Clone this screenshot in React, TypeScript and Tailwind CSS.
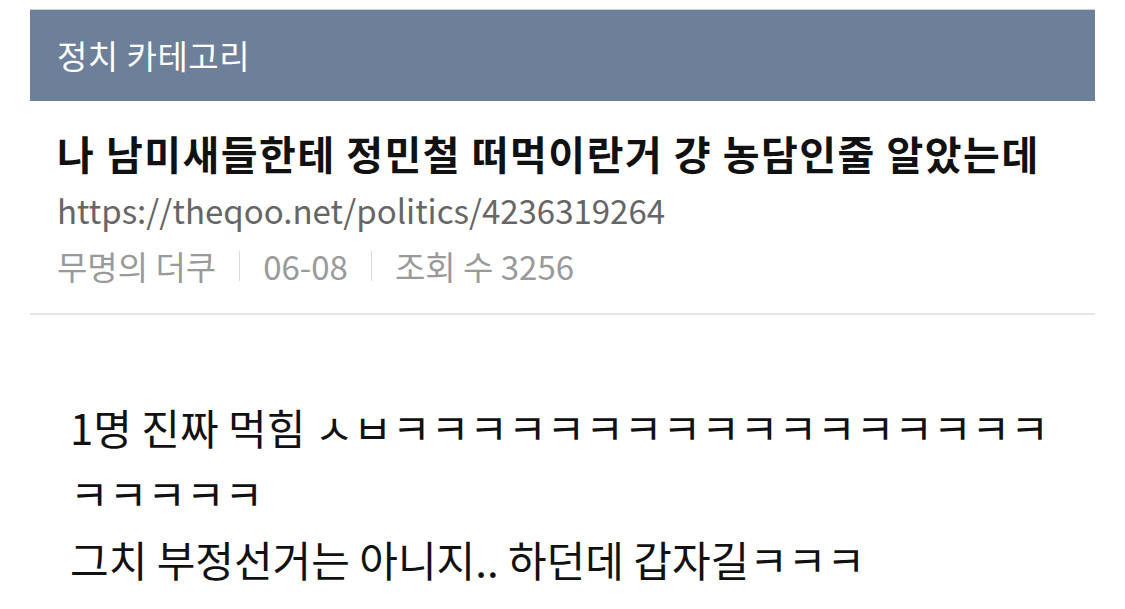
const KR = "font-['Noto_Sans_CJK_KR',sans-serif]";

export default function App() {
  return (
    <div className={`h-[609px] w-[1125px] overflow-hidden bg-white ${KR}`}>
      <div className="mx-[30px] mt-[9px] border-t border-[#c9ced6]">
        <div className="flex h-[91px] items-center bg-[#6e7f99] px-[27px] text-[33px] tracking-[0.5px] text-white">
          정치 카테고리
        </div>
        <div className="border-b-2 border-[#e6e6e6] px-[27px] pb-[19px] pt-[23px]">
          <h1 className="text-[40px] font-bold leading-[58px] tracking-[1.5px] text-[#111]">
            나 남미새들한테 정민철 떠먹이란거 걍 농담인줄 알았는데
          </h1>
          <div className="text-[33px] leading-[56px] text-[#666]">
            https://theqoo.net/politics/4236319264
          </div>
          <div className="flex items-center text-[33px] leading-[56px] text-[#9a9a9a]">
            <span>무명의 더쿠</span>
            <span className="mx-[23px] h-[30px] w-px bg-[#dcdcdc]" />
            <span>06-08</span>
            <span className="mx-[23px] h-[30px] w-px bg-[#dcdcdc]" />
            <span>조회 수 3256</span>
          </div>
        </div>
      </div>
      <div className="px-[70px] pt-[79px] text-[42px] leading-[66px] text-[#111]">
        <p className="w-[1000px]">1명 진짜 먹힘 ㅅㅂㅋㅋㅋㅋㅋㅋㅋㅋㅋㅋㅋㅋㅋㅋㅋㅋㅋㅋㅋㅋㅋㅋ</p>
        <p>그치 부정선거는 아니지.. 하던데 갑자길ㅋㅋㅋ</p>
      </div>
    </div>
  );
}
